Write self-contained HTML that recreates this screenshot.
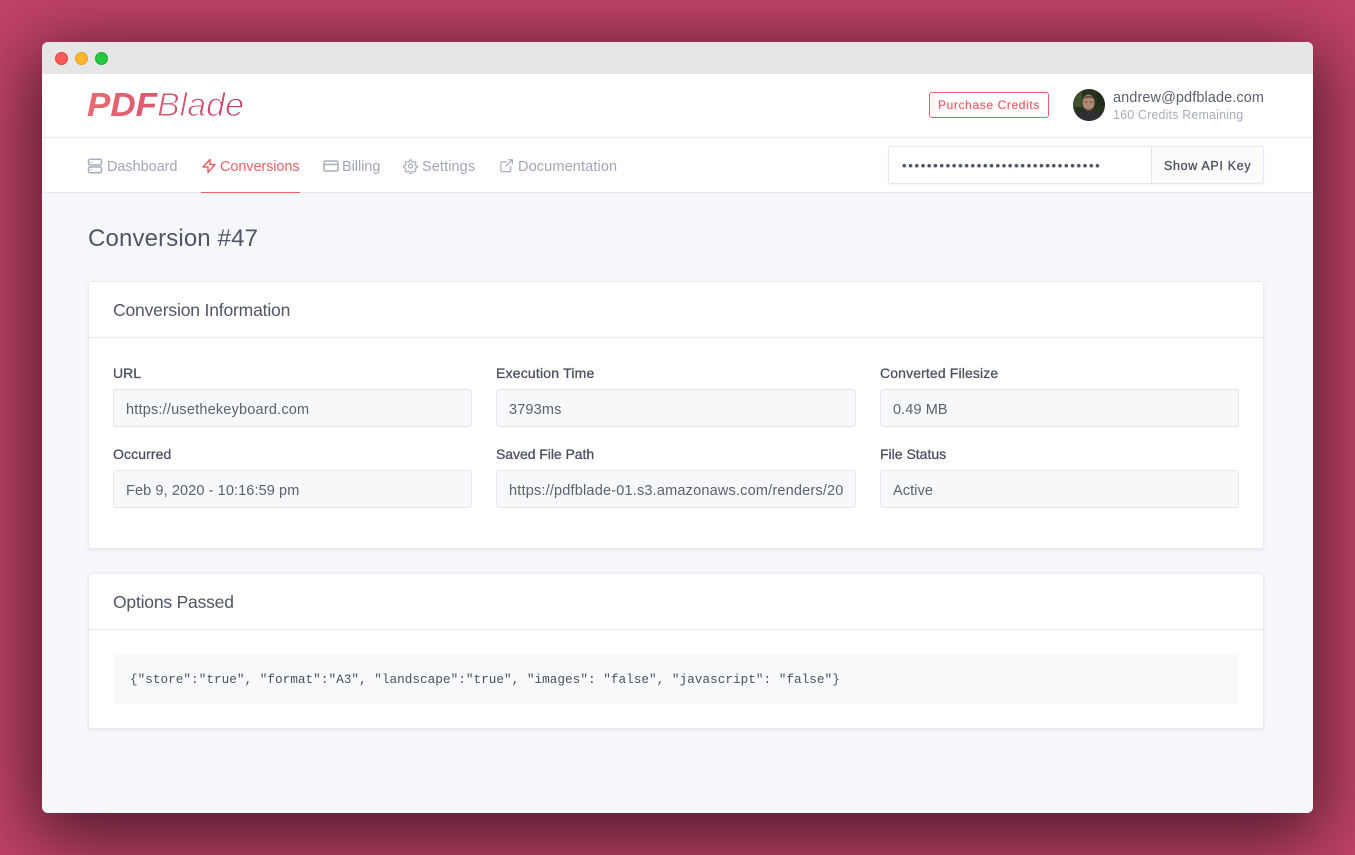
<!DOCTYPE html>
<html><head><meta charset="utf-8"><title>PDFBlade</title>
<style>
*{box-sizing:border-box;margin:0;padding:0}
html,body{width:1355px;height:855px;overflow:hidden;background:#c04268;font-family:"Liberation Sans",sans-serif}
#win{position:absolute;left:42px;top:42px;width:1271px;height:771px;border-radius:6px;background:#f5f7fb;box-shadow:0 16px 70px 8px rgba(0,0,0,.62)}
#in{position:absolute;left:0;top:0;width:1355px;height:855px;overflow:hidden}
.a{position:absolute;white-space:nowrap}
.box{position:absolute;background:#fff}
.t{position:absolute;white-space:nowrap;line-height:20px}
.nav{font-size:14.5px;color:#a0a6b6;top:156.500px}
.lab{font-size:14px;font-weight:400;color:#4a5160;-webkit-text-stroke:.3px #4a5160}
.val{font-size:14.5px;color:#5a6170}
.inp{position:absolute;height:38px;background:#f7f8fa;border:1px solid #e4e7ee;border-radius:3px}
.card{position:absolute;left:88px;width:1176px;background:#fff;border:1px solid #e8ebf2;border-radius:3px;box-shadow:0 1px 3px rgba(0,0,0,.07)}
.h{font-size:17.5px;color:#4f5665}
svg.i{position:absolute;fill:none;stroke:#a8adbc;stroke-width:1.5;stroke-linecap:round;stroke-linejoin:round}
</style></head><body>
<div id="win"></div>
<div id="in">
<div class="box" style="left:42px;top:42px;width:1271px;height:32px;background:#e6e6e6;border-radius:6px 6px 0 0"></div>
<div class="a" style="left:55px;top:52px;width:13px;height:13px;border-radius:50%;background:#fc5b57;border:.5px solid #e5453f"></div>
<div class="a" style="left:75px;top:52px;width:13px;height:13px;border-radius:50%;background:#fdb72f;border:.5px solid #e5a024"></div>
<div class="a" style="left:95px;top:52px;width:13px;height:13px;border-radius:50%;background:#27c840;border:.5px solid #1fae33"></div>

<div class="box" style="left:42px;top:74px;width:1271px;height:119px;border-bottom:1px solid #e6e8f0"></div>
<div class="box" style="left:42px;top:137px;width:1271px;height:1px;background:#e6e8ee"></div>

<svg class="a" style="left:80px;top:80px" width="180" height="50" viewBox="0 0 180 50">
<defs><linearGradient id="g" gradientUnits="userSpaceOnUse" x1="8" y1="0" x2="164" y2="0"><stop offset="0" stop-color="#ea6a72"/><stop offset="1" stop-color="#c4406c"/></linearGradient></defs>
<text x="7" y="36" font-family="Liberation Sans" font-size="33.5" font-weight="700" font-style="italic" fill="url(#g)" textLength="70" lengthAdjust="spacingAndGlyphs">PDF</text>
<text x="77" y="36" font-family="Liberation Sans" font-size="33.5" font-style="italic" fill="url(#g)" stroke="#fff" stroke-width="1" paint-order="fill" textLength="87" lengthAdjust="spacingAndGlyphs">Blade</text>
</svg>

<div class="a" style="left:929px;top:92px;width:120px;height:26px;border:1px solid #e9626a;border-radius:3px;background:#fff"></div>
<div class="t" style="left:938px;top:95px;font-size:12px;letter-spacing:.62px;color:#e9636b;-webkit-text-stroke:.2px #e9636b">Purchase Credits</div>

<svg class="a" style="left:1073px;top:89px" width="32" height="32" viewBox="0 0 32 32">
<defs><clipPath id="c"><circle cx="16" cy="16" r="16"/></clipPath></defs>
<g clip-path="url(#c)"><rect width="32" height="32" fill="#27331f"/><rect x="0" y="0" width="9" height="18" fill="#3e5230"/><rect x="24" y="2" width="8" height="14" fill="#1e2a1a"/>
<path d="M2 32c0-8 6-10 14-10s14 2 14 10z" fill="#2e2f33"/>
<ellipse cx="15.500" cy="13.500" rx="6" ry="8" fill="#b08a72"/><path d="M10 10c1-4 10-5 11 0-3-1.500-8-1.500-11 0z" fill="#6a5344"/>
<path d="M11 13h4M16.500 13h4" stroke="#5d4437" stroke-width=".8"/><path d="M12 19c2 2 5 2 7 0l-1 3h-5z" fill="#6a4a3a"/></g></svg>
<div class="t" style="left:1113px;top:87.500px;font-size:14.500px;letter-spacing:.09px;color:#5a6070">andrew@pdfblade.com</div>
<div class="t" style="left:1113px;top:105px;font-size:12.500px;letter-spacing:.15px;color:#a8adbc">160 Credits Remaining</div>

<svg class="i" style="left:87px;top:158px" width="16" height="16" viewBox="0 0 16 16"><rect x="1.500" y="1.300" width="13" height="5.700" rx="1.500"/><rect x="1.500" y="9" width="13" height="5.700" rx="1.500"/><path d="M4 4.200h.1M4 11.800h.1"/></svg>
<div class="t nav" style="left:107px;letter-spacing:-.06px">Dashboard</div>
<svg class="i" style="left:201px;top:158px;stroke:#e9636b" width="16" height="16" viewBox="0 0 16 16"><path d="M9 1.500v5h5L7 14.500v-5.500H2z"/></svg>
<div class="t nav" style="left:220px;color:#e9636b;letter-spacing:-.1px">Conversions</div>
<div class="a" style="left:201px;top:192px;width:99px;height:1px;background:#e9636b"></div>
<svg class="i" style="left:323px;top:158px" width="16" height="16" viewBox="0 0 16 16"><rect x="1" y="3" width="14" height="10" rx="1.500"/><path d="M1 6.500h14"/></svg>
<div class="t nav" style="left:342px;letter-spacing:-.05px">Billing</div>
<svg class="i" style="left:403px;top:158px;stroke-width:1.200" width="15" height="16" viewBox="0 0 16 16"><circle cx="8" cy="8" r="2.200"/><path d="M7 1.500h2l.4 1.900 1.300.6 1.700-1 1.400 1.400-1 1.700.6 1.300 1.900.4v2l-1.900.4-.6 1.300 1 1.700-1.400 1.400-1.700-1-1.300.6-.4 1.900H7l-.4-1.900-1.300-.6-1.700 1-1.400-1.400 1-1.700-.6-1.300-1.900-.4v-2l1.900-.4.6-1.300-1-1.700L3.600 3l1.700 1 1.300-.6z"/></svg>
<div class="t nav" style="left:422px;letter-spacing:.1px">Settings</div>
<svg class="i" style="left:499px;top:158px;stroke-width:1.300" width="15" height="15" viewBox="0 0 16 16"><path d="M12.500 9v4a1.500 1.500 0 0 1-1.500 1.500H3.500A1.500 1.500 0 0 1 2 13V5.500A1.500 1.500 0 0 1 3.500 4H7.500M10 1.800h4.200V6M14 2 7.500 8.500"/></svg>
<div class="t nav" style="left:518px;letter-spacing:.13px">Documentation</div>

<div class="a" style="left:888px;top:146px;width:376px;height:38px;background:#fff;border:1px solid #e6e8f0;border-radius:3px;box-shadow:0 1px 2px rgba(0,0,0,.05)"></div>
<div class="a" style="left:1151px;top:147px;width:113px;height:36px;background:#fbfbfc;border-left:1px solid #e4e6ee;border-right:1px solid #e6e8f0;border-radius:0 3px 3px 0"></div>
<div class="t" style="left:902px;top:156px;font-size:13px;letter-spacing:1.68px;color:#4f5665;-webkit-text-stroke:.2px #4f5665">••••••••••••••••••••••••••••••••</div>
<div class="t" style="left:1164px;top:156px;font-size:12.500px;letter-spacing:.67px;color:#4d5361;-webkit-text-stroke:.3px #4d5361">Show API Key</div>

<div class="t" style="left:88px;top:226px;line-height:26px;font-size:24px;color:#4f5665;letter-spacing:.14px">Conversion #47</div>

<div class="card" style="top:281px;height:268px"></div>
<div class="a" style="left:89px;top:337px;width:1174px;height:1px;background:#e6e8f0"></div>
<div class="t h" style="left:113px;top:300px;letter-spacing:-.17px">Conversion Information</div>

<div class="t lab" style="left:113px;top:363px;letter-spacing:0">URL</div>
<div class="inp" style="left:113px;top:389px;width:359px"></div>
<div class="t val" style="left:126px;top:399.500px;letter-spacing:.2px">https://usethekeyboard.com</div>
<div class="t lab" style="left:496px;top:363px;letter-spacing:.2px">Execution Time</div>
<div class="inp" style="left:496px;top:389px;width:360px"></div>
<div class="t val" style="left:509px;top:399.500px;letter-spacing:.15px">3793ms</div>
<div class="t lab" style="left:880px;top:363px;letter-spacing:.13px">Converted Filesize</div>
<div class="inp" style="left:880px;top:389px;width:359px"></div>
<div class="t val" style="left:893px;top:399.500px;letter-spacing:.1px">0.49 MB</div>

<div class="t lab" style="left:113px;top:444px;letter-spacing:.1px">Occurred</div>
<div class="inp" style="left:113px;top:470px;width:359px"></div>
<div class="t val" style="left:126px;top:480.500px;letter-spacing:.1px">Feb 9, 2020 - 10:16:59 pm</div>
<div class="t lab" style="left:496px;top:444px;letter-spacing:-.05px">Saved File Path</div>
<div class="inp" style="left:496px;top:470px;width:360px"></div>
<div class="t val" style="left:509px;top:480.500px;letter-spacing:.19px">https://pdfblade-01.s3.amazonaws.com/renders/20</div>
<div class="t lab" style="left:880px;top:444px;letter-spacing:0">File Status</div>
<div class="inp" style="left:880px;top:470px;width:359px"></div>
<div class="t val" style="left:893px;top:480.500px;letter-spacing:.1px">Active</div>

<div class="card" style="top:573px;height:156px"></div>
<div class="a" style="left:89px;top:629px;width:1174px;height:1px;background:#e6e8f0"></div>
<div class="t h" style="left:113px;top:592px;letter-spacing:-.2px">Options Passed</div>
<div class="a" style="left:113px;top:654px;width:1126px;height:50px;background:#f8f9fb;border-radius:3px"></div>
<div class="t" style="left:130px;top:669.500px;font-family:'Liberation Mono',monospace;font-size:12.720px;color:#4a5160">{"store":"true", "format":"A3", "landscape":"true", "images": "false", "javascript": "false"}</div>
</div>
</body></html>
